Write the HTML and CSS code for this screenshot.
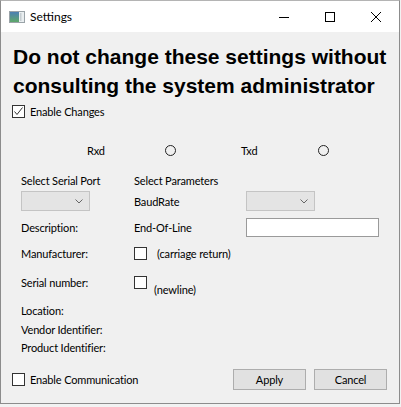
FILE: index.html
```html
<!DOCTYPE html>
<html>
<head>
<meta charset="utf-8">
<link rel="stylesheet" href="styles.css">
</head>
<body>
<div class="window">
  <div class="titlebar">
    <svg class="app-icon" width="16" height="12" viewBox="0 0 16 12">
      <defs>
        <linearGradient id="g1" x1="0" y1="0" x2="0" y2="1">
          <stop offset="0" stop-color="#4b7fb3"/>
          <stop offset="1" stop-color="#5fa86a"/>
        </linearGradient>
      </defs>
      <rect x="0.5" y="0.5" width="15" height="11" fill="#e9eef0" stroke="#9aa3a8"/>
      <rect x="1" y="1" width="9" height="10" fill="url(#g1)"/>
      <rect x="11" y="2" width="1.5" height="8" fill="#c6cdd1"/>
    </svg>
    <span class="title">Settings</span>
    <div class="controls">
      <span class="ctl"><svg width="10" height="10" viewBox="0 0 10 10"><line x1="0" y1="5.5" x2="10" y2="5.5" stroke="#000" stroke-width="1"/></svg></span>
      <span class="ctl"><svg width="10" height="10" viewBox="0 0 10 10"><rect x="0.5" y="0.5" width="9" height="9" fill="none" stroke="#000" stroke-width="1"/></svg></span>
      <span class="ctl"><svg width="10" height="10" viewBox="0 0 10 10"><path d="M0 0L10 10M10 0L0 10" stroke="#000" stroke-width="1"/></svg></span>
    </div>
  </div>
  <div class="content">
    <h1 class="warning">Do not change these settings without<br>consulting the system administrator</h1>
    <div class="check-row enable-changes">
      <span class="checkbox"><svg width="11" height="11" viewBox="0 0 11 11"><polyline points="1.5,5.5 4,8.5 9.5,1.5" fill="none" stroke="#333" stroke-width="1"/></svg></span>
      <span>Enable Changes</span>
    </div>
    <div class="status-row">
      <span>Rxd</span><span class="led"></span><span>Txd</span><span class="led"></span>
    </div>
    <div class="form-grid">
      <span>Select Serial Port</span><span>Select Parameters</span><span></span>
      <span class="combo"><svg width="8" height="5" viewBox="0 0 8 5"><polyline points="0.5,0.5 4,4 7.5,0.5" fill="none" stroke="#666" stroke-width="1"/></svg></span>
      <span>BaudRate</span>
      <span class="combo"><svg width="8" height="5" viewBox="0 0 8 5"><polyline points="0.5,0.5 4,4 7.5,0.5" fill="none" stroke="#666" stroke-width="1"/></svg></span>
      <span>Description:</span><span>End-Of-Line</span><span class="line-edit"></span>
      <span>Manufacturer:</span>
      <span class="opt opt-cr"><span class="checkbox"></span><span>(carriage return)</span></span>
      <span></span>
      <span>Serial number:</span>
      <span class="opt opt-nl"><span class="checkbox"></span><span class="nl-text">(newline)</span></span>
      <span></span>
      <span>Location:</span><span></span><span></span>
      <span>Vendor Identifier:</span><span></span><span></span>
      <span>Product Identifier:</span><span></span><span></span>
    </div>
    <div class="footer">
      <div class="check-row">
        <span class="checkbox"></span>
        <span>Enable Communication</span>
      </div>
      <span class="button apply">Apply</span>
      <span class="button">Cancel</span>
    </div>
  </div>
</div>
</body>
</html>
```
FILE: styles.css
```css
html, body {
  margin: 0;
  padding: 0;
  background: #f2f2f2;
  font-family: Lato, "Noto Sans", sans-serif;
  font-size: 11px;
  letter-spacing: -0.15px;
  color: #000;
}

.window {
  width: 400px;
  height: 404px;
  box-sizing: border-box;
  border: 1px solid #8c8c8c;
  border-top-color: #b4b4b4;
  background: #f0f0f0;
  display: flex;
  flex-direction: column;
}

.titlebar {
  height: 31px;
  flex-shrink: 0;
  background: #fff;
  display: flex;
  align-items: center;
}

.app-icon {
  margin-left: 8px;
  display: block;
}

.title {
  margin-left: 5px;
  font-size: 12px;
  letter-spacing: 0;
}

.controls {
  margin-left: auto;
  display: flex;
  height: 100%;
}

.ctl {
  width: 46px;
  display: flex;
  align-items: center;
  justify-content: center;
}

.ctl svg { display: block; }

.content {
  flex: 1;
  display: flex;
  flex-direction: column;
}

.warning {
  margin: 10px 0 0 12px;
  font-family: "Liberation Sans", Arial, sans-serif;
  font-weight: bold;
  font-size: 21px;
  line-height: 29px;
  letter-spacing: 0;
}

.check-row {
  display: flex;
  align-items: center;
  gap: 5px;
  height: 17px;
  white-space: nowrap;
}

.enable-changes {
  margin: 3px 0 0 11px;
}

.checkbox {
  width: 13px;
  height: 13px;
  box-sizing: border-box;
  border: 1px solid #333;
  background: #fff;
  display: flex;
  align-items: center;
  justify-content: center;
  flex-shrink: 0;
}

.checkbox svg { display: block; }

.status-row {
  margin: 22px 0 0 86px;
  height: 17px;
  display: grid;
  grid-template-columns: 78px 76px 77px auto;
  align-items: center;
}

.led {
  width: 11px;
  height: 11px;
  box-sizing: border-box;
  border: 1px solid #222;
  border-radius: 50%;
}

.form-grid {
  margin: 12px 0 0 20px;
  display: grid;
  grid-template-columns: 113px 112px 133px;
  grid-template-rows: 19px 22px 30px 22px 36px 20px 18px 19px;
  align-items: center;
  white-space: nowrap;
}

.combo {
  width: 69px;
  height: 20px;
  box-sizing: border-box;
  border: 1px solid #c4c4c4;
  background: #e4e4e4;
  display: flex;
  align-items: center;
  justify-content: flex-end;
  padding-right: 6px;
}

.combo svg { display: block; }

.line-edit {
  width: 133px;
  height: 19px;
  box-sizing: border-box;
  border: 1px solid #9a9a9a;
  background: #fff;
}

.opt {
  display: flex;
  align-items: center;
}

.opt-cr { gap: 10px; }

.opt-nl { gap: 7px; }

.nl-text { margin-top: 14px; }

.footer {
  margin-top: 12px;
  height: 21px;
  padding: 0 12px 0 11px;
  display: flex;
  align-items: center;
  gap: 8px;
}

.footer .check-row { margin-right: auto; }

.button {
  width: 73px;
  height: 21px;
  box-sizing: border-box;
  border: 1px solid #adadad;
  background: #e1e1e1;
  display: flex;
  align-items: center;
  justify-content: center;
}
```
